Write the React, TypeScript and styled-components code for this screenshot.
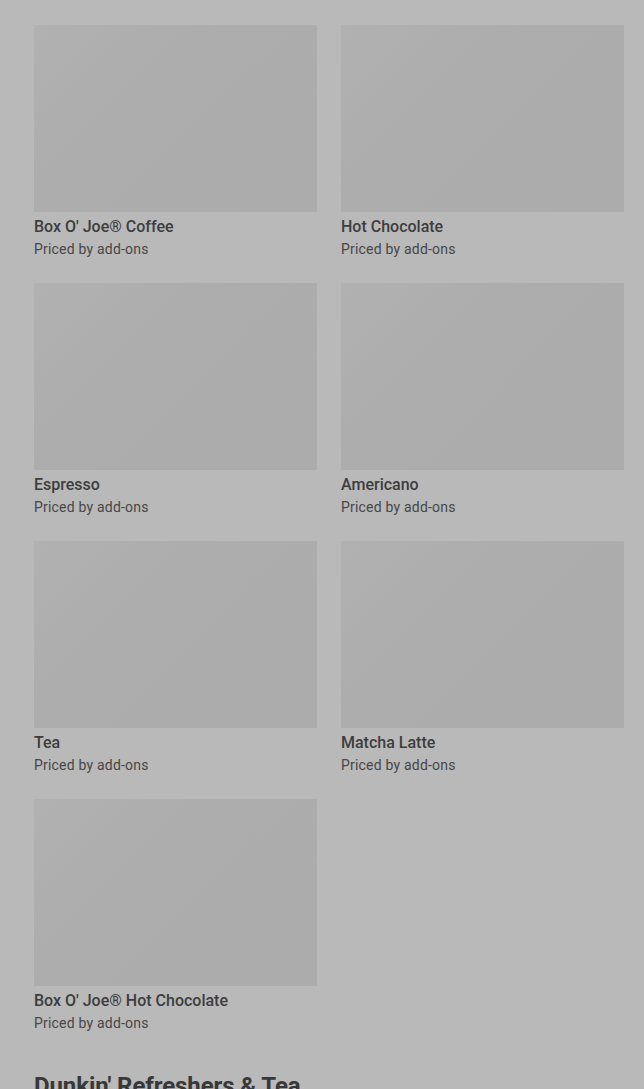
import styled, { createGlobalStyle } from "styled-components";

const GlobalStyle = createGlobalStyle`
  html, body {
    margin: 0;
    padding: 0;
    background: #b9b9b9;
    font-family: Roboto, "Liberation Sans", Arial, sans-serif;
  }
`;

const Page = styled.div`
  padding: 25px 20px 0 34px;
  height: 1089px;
  overflow: hidden;
  box-sizing: border-box;
`;

const Grid = styled.div`
  display: grid;
  grid-template-columns: 283px 283px;
  column-gap: 24px;
  row-gap: 24px;
`;

const Card = styled.div`
  display: flex;
  flex-direction: column;
`;

const Thumb = styled.div`
  height: 187px;
  background: linear-gradient(135deg, #b1b1b1 0%, #adadad 35%, #acacac 100%);
`;

const Title = styled.div`
  margin-top: 5px;
  font-size: 16px;
  line-height: 20px;
  font-weight: 500;
  color: #3d3d3d;
`;

const Sub = styled.div`
  margin-top: 2px;
  font-size: 14px;
  line-height: 20px;
  font-weight: 400;
  letter-spacing: 0.2px;
  color: #474747;
`;

const Heading = styled.h2`
  margin: 37px 0 0;
  font-size: 24px;
  line-height: 32px;
  font-weight: 700;
  letter-spacing: -0.1px;
  color: #383838;
`;

const items = [
  "Box O' Joe® Coffee",
  "Hot Chocolate",
  "Espresso",
  "Americano",
  "Tea",
  "Matcha Latte",
  "Box O' Joe® Hot Chocolate",
];

export default function App() {
  return (
    <>
      <GlobalStyle />
      <Page>
        <Grid>
          {items.map((name) => (
            <Card key={name}>
              <Thumb />
              <Title>{name}</Title>
              <Sub>Priced by add-ons</Sub>
            </Card>
          ))}
        </Grid>
        <Heading>Dunkin' Refreshers &amp; Tea</Heading>
      </Page>
    </>
  );
}
